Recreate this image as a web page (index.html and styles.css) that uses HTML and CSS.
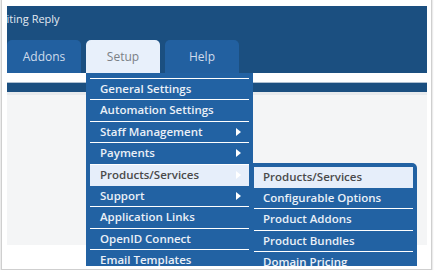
FILE: index.html
```html
<!DOCTYPE html>
<html lang="en">
<head>
    <meta charset="UTF-8">
    <meta name="viewport" content="width=device-width, initial-scale=1.0">
    <title>Setup menu</title>
    <link rel="stylesheet" href="styles.css">
</head>
<body>
    <div class="frame">
        <div class="shot">
            <header class="topbar">
                <div class="crumb"><span>Awaiting Reply</span></div>
                <nav class="tabs">
                    <div class="tab">Addons</div>
                    <div class="tab tab-open">Setup
                        <ul class="menu">
                            <li>General Settings</li>
                            <li>Automation Settings</li>
                            <li class="has-sub">Staff Management</li>
                            <li class="has-sub">Payments</li>
                            <li class="has-sub active">Products/Services
                                <ul class="menu submenu">
                                    <li class="active">Products/Services</li>
                                    <li>Configurable Options</li>
                                    <li>Product Addons</li>
                                    <li>Product Bundles</li>
                                    <li>Domain Pricing</li>
                                </ul>
                            </li>
                            <li class="has-sub">Support</li>
                            <li>Application Links</li>
                            <li>OpenID Connect</li>
                            <li>Email Templates</li>
                        </ul>
                    </div>
                    <div class="tab">Help</div>
                </nav>
            </header>
            <div class="strip-white"></div>
            <div class="strip-dark"></div>
            <div class="content"></div>
        </div>
    </div>
</body>
</html>
```

FILE: styles.css
```css
body {
    margin: 0;
    background-color: white;
    font-family: "Open Sans", "DejaVu Sans", sans-serif;
    overflow: hidden;
}

.frame {
    box-sizing: border-box;
    width: 431px;
    margin: -2px 0 0 1px;
    padding: 7px 4px 3px 5px;
    border: 1px solid #cfcfcf;
    background-color: white;
    box-shadow: 0 1px 2px rgba(0, 0, 0, 0.25);
}

.shot {
    width: 420px;
    height: 260px;
    overflow: hidden;
    background-color: white;
}

.topbar {
    height: 67px;
    background-color: #1b4f80;
    display: flex;
    flex-direction: column;
    justify-content: space-between;
}

.crumb {
    overflow: hidden;
    height: 20px;
    padding-top: 5px;
    font-size: 11px;
    color: #e3eaf2;
    white-space: nowrap;
}

.crumb span {
    margin-left: -22px;
}

.tabs {
    display: flex;
    gap: 5px;
}

.tab {
    position: relative;
    width: 74px;
    height: 33px;
    border-radius: 5px 5px 0 0;
    background-color: #2260a0;
    color: #cfdcec;
    font-size: 12px;
    display: flex;
    justify-content: center;
    align-items: center;
}

.tab-open {
    background-color: #e8f0fb;
    color: #7a7f86;
}

.strip-white {
    height: 9px;
    border-bottom: 1px solid #aebfd0;
}

.strip-dark {
    height: 9px;
    background-color: #1b4f80;
}

.content {
    height: 150px;
    border-top: 3px solid #e7eaed;
    background-color: #f4f5f6;
}

.menu {
    position: absolute;
    top: 33px;
    left: 0;
    z-index: 2;
    box-sizing: border-box;
    width: 167px;
    margin: 0;
    padding: 5px 4px 0;
    list-style: none;
    background-color: #2262a3;
    text-align: left;
}

.menu li {
    position: relative;
    height: 20.4px;
    line-height: 20.4px;
    padding-left: 10px;
    border-bottom: 1px solid white;
    font-size: 11.5px;
    font-weight: 600;
    color: #eaf0f7;
    white-space: nowrap;
}

.menu > li:first-child {
    border-top: 1px solid white;
}

.menu li.has-sub::after {
    content: "";
    position: absolute;
    right: 8px;
    top: 6px;
    border-left: 5px solid white;
    border-top: 4px solid transparent;
    border-bottom: 4px solid transparent;
}

.menu li.active {
    background-color: #e6eefa;
    border-bottom-color: #e6eefa;
    color: #4a4a4a;
}

.submenu {
    top: -2px;
    left: 160px;
    padding: 4px 4px 0;
    border-radius: 0 5px 0 0;
}

.submenu li {
    padding-left: 9px;
}

.submenu > li:first-child {
    border-top: none;
}
```
